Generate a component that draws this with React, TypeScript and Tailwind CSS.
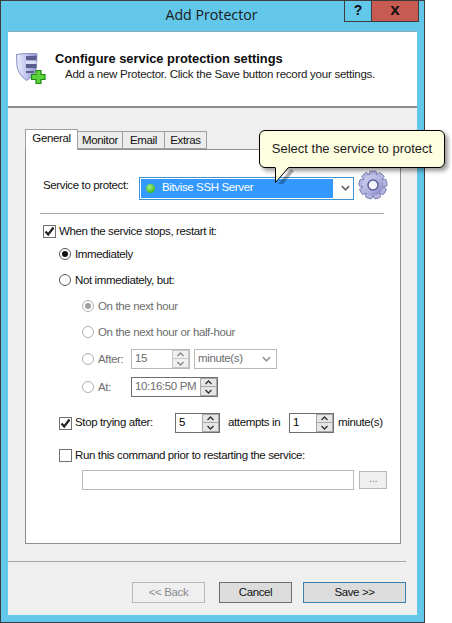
const F = "[font-family:'Liberation_Sans',Arial,sans-serif]";

function Check({ on }: { on?: boolean }) {
  return (
    <span className="flex h-[13px] w-[13px] shrink-0 items-center justify-center border border-[#707070] bg-white">
      {on && (
        <svg width="11" height="11" viewBox="0 0 11 11">
          <path d="M1.5 5.5 L4.2 8.5 L9.5 1.5" fill="none" stroke="#222" strokeWidth="2.2" />
        </svg>
      )}
    </span>
  );
}

function Radio({ on, gray }: { on?: boolean; gray?: boolean }) {
  return (
    <span className={`flex h-[12px] w-[12px] shrink-0 items-center justify-center rounded-full border bg-white ${gray ? "border-[#b0b0b0]" : "border-[#555]"}`}>
      {on && <span className={`h-[6px] w-[6px] rounded-full ${gray ? "bg-[#a0a0a0]" : "bg-[#111]"}`} />}
    </span>
  );
}

function Chev({ up, color = "#444", big }: { up?: boolean; color?: string; big?: boolean }) {
  return (
    <svg width={big ? 9 : 7} height={big ? 6 : 5} viewBox="0 0 7 5">
      <path d={up ? "M0.5 4 L3.5 1 L6.5 4" : "M0.5 1 L3.5 4 L6.5 1"} fill="none" stroke={color} strokeWidth="1.4" />
    </svg>
  );
}

function SpinBtns({ gray }: { gray?: boolean }) {
  const c = gray ? "border-[#c8c8c8] bg-[#f0f0f0]" : "border-[#a8a8a8] bg-[#e6e6e6]";
  return (
    <span className="flex h-full w-[17px] shrink-0 flex-col">
      <span className={`flex h-1/2 items-center justify-center border ${c}`}><Chev up color={gray ? "#888" : "#333"} /></span>
      <span className={`flex h-1/2 items-center justify-center border border-t-0 ${c}`}><Chev color={gray ? "#888" : "#333"} /></span>
    </span>
  );
}

function Spin({ value, w, gray, dim }: { value: string; w: string; gray?: boolean; dim?: boolean }) {
  return (
    <span className={`flex h-[20px] shrink-0 items-stretch border ${w} ${gray ? "border-[#b8b8b8] text-[#6d6d6d]" : dim ? "border-[#6e6e6e] text-[#6d6d6d]" : "border-[#6e6e6e] text-black"} bg-white`}>
      <span className="flex flex-1 items-center pl-[3px]">{value}</span>
      <SpinBtns gray={gray} />
    </span>
  );
}

function Gear() {
  const teeth = Array.from({ length: 9 }, (_, i) => i * 40);
  return (
    <svg width="30" height="30" viewBox="0 0 30 30" className="shrink-0">
      <defs>
        <linearGradient id="g" x1="0" y1="0" x2="1" y2="1">
          <stop offset="0" stopColor="#d2d2ee" />
          <stop offset="0.55" stopColor="#b0b1de" />
          <stop offset="1" stopColor="#8081c2" />
        </linearGradient>
      </defs>
      {teeth.map((a) => (
        <rect key={a} x="11.5" y="1" width="7" height="7" rx="1.5" fill="#b4b5e0" stroke="#6f70aa" strokeWidth="0.8" transform={`rotate(${a} 15 15)`} />
      ))}
      <circle cx="15" cy="15" r="10.5" fill="url(#g)" />
      <circle cx="15" cy="15" r="5" fill="#f4f4fb" stroke="#5f6098" strokeWidth="1.5" />
    </svg>
  );
}

function Shield() {
  return (
    <svg width="30" height="32" viewBox="0 0 30 32" className="shrink-0">
      <defs>
        <linearGradient id="s" x1="0" y1="0" x2="1" y2="0">
          <stop offset="0" stopColor="#eef0fc" />
          <stop offset="0.45" stopColor="#c3c6ee" />
          <stop offset="1" stopColor="#8d90c8" />
        </linearGradient>
      </defs>
      <path d="M0.5 1.5 Q11 -0.5 21 0.8 L20.5 14 Q19.5 22 10.5 27.5 Q2.5 22 1 13 Z" fill="url(#s)" stroke="#8a8cc0" />
      <path d="M10 3 H20.4 V7.5 H10 Z M10 11 H20.4 V15 H10 Z M10 18 H18 V20 H10 Z" fill="#5b5d8e" />
      <path d="M10 7.5 H20.4 V11 H10 Z" fill="#dadbf4" />
      <path d="M20 17.5 H25 V21.5 H29 V26.5 H25 V30.5 H20 V26.5 H15.5 V21.5 H20 Z" fill="#5fd13a" stroke="#1f8a17" strokeWidth="1.2" />
    </svg>
  );
}

function Tab({ label, w, active }: { label: string; w: string; active?: boolean }) {
  return active ? (
    <span className={`z-10 mt-px flex h-[21px] items-center justify-center self-start border border-b-0 border-[#a0a0a0] bg-white pb-[2px] ${w}`}>{label}</span>
  ) : (
    <span className={`mt-[3px] flex h-[18px] items-center justify-center border border-l-0 border-[#a0a0a0] bg-[#ececec] pt-[1px] ${w}`}>{label}</span>
  );
}

function Lbl({ children, className = "" }: { children: React.ReactNode; className?: string }) {
  return <span className={`mt-px ${className}`}>{children}</span>;
}

export default function App() {
  return (
    <div className={`relative h-[623px] w-[452px] overflow-hidden whitespace-nowrap bg-white text-[11.5px] tracking-[-0.37px] text-[#111] ${F}`}>
      <div className="flex h-[623px] w-[425px] flex-col border border-[#3c3c3c] bg-[#63c7ea]">
        {/* title bar */}
        <div className="flex h-[30px] shrink-0 items-start">
          <div className="flex h-[30px] flex-1 items-center justify-center pb-[2px] pl-[78px] text-[14.2px] tracking-normal text-[#1a1a1a] [font-family:'Open_Sans',sans-serif]">
            Add Protector
          </div>
          <div className="mr-[5px] flex h-[21px] shrink-0 border border-t-0 border-[#3c3c3c]">
            <span className="flex w-[27px] items-center justify-center border-r border-[#3c3c3c] pb-[2px] text-[14px] font-bold tracking-normal">?</span>
            <span className="flex w-[46px] items-center justify-center bg-[#c75b52] pb-[3px] text-[17px] font-bold tracking-normal">x</span>
          </div>
        </div>

        {/* client area */}
        <div className="mx-[7px] flex min-h-0 flex-1 flex-col border-t border-[#8fa8b4] bg-[#efefef]">
          <div className="flex h-[76px] shrink-0 items-start border-b-2 border-[#8c8c8c] bg-white pl-[8px] pt-[21px]">
            <Shield />
            <div className="ml-[9px] mt-[-2px]">
              <div className="text-[12.85px] font-bold leading-[16px] tracking-normal text-[#0c0c0c]">Configure service protection settings</div>
              <div className="ml-[10px] text-[11.5px] leading-[15px] tracking-[-0.25px] text-[#1a1a1a]">Add a new Protector. Click the Save button record your settings.</div>
            </div>
          </div>

          {/* tabs */}
          <div className="ml-[17px] mt-[20px] flex w-[376px] flex-col">
            <div className="mb-[-1px] flex h-[22px]">
              <Tab label="General" w="w-[53px]" active />
              <Tab label="Monitor" w="w-[45px]" />
              <Tab label="Email" w="w-[42px]" />
              <Tab label="Extras" w="w-[42px]" />
            </div>
            <div className="flex h-[395px] flex-col border border-[#8e8e8e] bg-white pt-[20px]">
              {/* service */}
              <div className="flex h-[30px] items-center pl-[17px]">
                <span className="mt-[2px] w-[96px]">Service to protect:</span>
                <div className="mt-[6px] flex h-[23px] w-[215px] items-center border border-[#3f94cf] bg-white p-[1px]">
                  <div className="flex h-[19px] w-[192px] items-center bg-[#3399ff] pl-[5px] text-white">
                    <span className="mr-[7px] h-[9px] w-[9px] rounded-full bg-[radial-gradient(circle_at_40%_35%,#a8f08a,#3fbf1f_70%,#2a8f18)]" />
                    Bitvise SSH Server
                  </div>
                  <span className="ml-[8px] flex"><Chev color="#666" big /></span>
                </div>
                <span className="ml-[4px]"><Gear /></span>
              </div>

              <div className="ml-[14px] mt-[13px] h-px w-[344px] shrink-0 bg-[#a8a8a8]" />

              <div className="ml-[17px] mt-[7px] flex h-[20px] items-center gap-[3px]"><Check on /><Lbl>When the service stops, restart it:</Lbl></div>
              <div className="ml-[33px] mt-[3px] flex h-[20px] items-center gap-[4px]"><Radio on /><Lbl>Immediately</Lbl></div>
              <div className="ml-[33px] mt-[6px] flex h-[20px] items-center gap-[4px]"><Radio /><Lbl>Not immediately, but:</Lbl></div>

              <div className="text-[#6d6d6d]">
                <div className="ml-[56px] mt-[6px] flex h-[20px] items-center gap-[4px]"><Radio on gray /><Lbl>On the next hour</Lbl></div>
                <div className="ml-[56px] mt-[6px] flex h-[20px] items-center gap-[4px]"><Radio gray /><Lbl>On the next hour or half-hour</Lbl></div>
                <div className="ml-[56px] mt-[7px] flex h-[20px] items-center gap-[4px]">
                  <Radio gray /><Lbl className="w-[29px]">After:</Lbl>
                  <Spin value="15" w="w-[59px]" gray />
                  <span className="flex h-[20px] w-[83px] items-center justify-between border border-[#b8b8b8] bg-white pl-[3px] pr-[5px]">minute(s)<Chev color="#999" big /></span>
                </div>
                <div className="ml-[56px] mt-[8px] flex h-[20px] items-center gap-[4px]">
                  <Radio gray /><Lbl className="w-[29px]">At:</Lbl>
                  <Spin value="10:16:50 PM" w="w-[87px]" dim />
                </div>
              </div>

              <div className="ml-[33px] mt-[16px] flex h-[20px] items-center">
                <Check on /><span className="ml-[3px] w-[100px]">Stop trying after:</span>
                <Spin value="5" w="w-[45px]" />
                <span className="ml-[8px] w-[61px]">attempts in</span>
                <Spin value="1" w="w-[45px]" />
                <span className="ml-[4px]">minute(s)</span>
              </div>
              <div className="ml-[33px] mt-[12px] flex h-[20px] items-center gap-[3px]"><Check /><Lbl>Run this command prior to restarting the service:</Lbl></div>
              <div className="ml-[56px] mt-[5px] flex h-[20px] items-center gap-[5px]">
                <span className="h-[20px] w-[272px] border border-[#b8b8b8] bg-white" />
                <span className="flex h-[18px] w-[28px] items-center justify-center border border-[#b8b8b8] bg-[#efefef] pb-[2px] text-[#8a8a8a]">...</span>
              </div>
            </div>
          </div>

          {/* footer */}
          <div className="mt-[17px] h-px w-[398px] shrink-0 bg-[#a8a8a8]" />
          <div className="ml-[124px] mt-[20px] flex">
            <span className="flex h-[21px] w-[73px] items-center justify-center border border-[#b8b8b8] bg-[#efefef] text-[#8a8a8a]">&lt;&lt; Back</span>
            <span className="ml-[14px] flex h-[21px] w-[73px] items-center justify-center border border-[#6e6e6e] bg-[#dcdcdc]">Cancel</span>
            <span className="ml-[11px] flex h-[21px] w-[103px] items-center justify-center border border-[#3c7fb1] bg-[#dcdcdc]">Save &gt;&gt;</span>
          </div>
        </div>
        <div className="h-[7px] shrink-0" />
      </div>

      {/* tooltip */}
      <div className="absolute left-[259px] top-[130px] flex h-[38px] w-[186px] items-center justify-center rounded-[6px] border border-black bg-[#fdfddf] text-[13px] tracking-normal text-[#1c1c1c] shadow-[3px_3px_4px_rgba(0,0,0,0.4)]">
        Select the service to protect
      </div>
      <svg className="absolute left-[271px] top-[166px]" width="24" height="18" viewBox="0 0 24 18">
        <path d="M20 3 L7 18 L12 18 L23 5 Z" fill="rgba(0,0,0,0.3)" />
        <path d="M4 0.5 L4 16.5 L17.5 1.5 L17.5 0.5 Z" fill="#fdfddf" />
        <path d="M4.5 1.5 L4.5 16.5 L17.5 1.5" fill="none" stroke="#000" />
      </svg>
    </div>
  );
}
